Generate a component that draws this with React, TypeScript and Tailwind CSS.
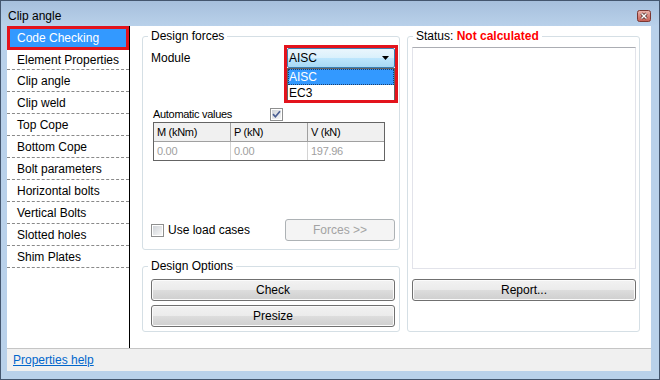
import React from "react";

function CheckBox({ checked }: { checked?: boolean }) {
  return (
    <div className="w-[13px] h-[13px] flex-none border border-[#8e8f8f] bg-white p-[1px]">
      <div className="w-full h-full bg-[linear-gradient(135deg,#cfd3d8,#f7f7f7)] flex items-center justify-center">
        {checked && (
          <svg width="9" height="9" viewBox="0 0 9 9">
            <path d="M1 4.2 L3.4 6.8 L8 1.2" stroke="#4b5f93" strokeWidth="1.7" fill="none" />
          </svg>
        )}
      </div>
    </div>
  );
}

function Btn({ children, className = "" }: { children: React.ReactNode; className?: string }) {
  return (
    <div
      className={
        "h-[22px] w-full flex-none rounded-[3px] border border-[#707070] bg-[linear-gradient(#f2f2f2_0%,#ebebeb_50%,#dddddd_50%,#cfcfcf_100%)] shadow-[inset_0_0_0_1px_#fbfbfb] flex items-center justify-center text-[12px] text-black " +
        className
      }
    >
      {children}
    </div>
  );
}

const navItems = [
  "Clip angle",
  "Clip weld",
  "Top Cope",
  "Bottom Cope",
  "Bolt parameters",
  "Horizontal bolts",
  "Vertical Bolts",
  "Slotted holes",
  "Shim Plates",
];

export default function App() {
  return (
    <div className="w-[660px] h-[380px] border border-[#44566e] bg-[#b9d1ea] flex flex-col [font-family:'Liberation_Sans',Arial,sans-serif] text-black overflow-hidden">
      {/* Title bar */}
      <div className="h-[25px] flex-none flex items-center justify-between pl-[7px] pr-[8px] pt-[5px] bg-[linear-gradient(#a6bfdc,#b9d1ea)]">
        <span className="text-[12px] leading-[16px]">Clip angle</span>
        <svg width="14" height="12" viewBox="0 0 14 12">
          <defs>
            <linearGradient id="cb" x1="0" y1="0" x2="0" y2="1">
              <stop offset="0" stopColor="#ebb6ae" />
              <stop offset="0.5" stopColor="#d8867d" />
              <stop offset="1" stopColor="#c45d53" />
            </linearGradient>
          </defs>
          <rect x="0.5" y="0.5" width="13" height="11" rx="2" fill="url(#cb)" stroke="#7b3631" />
          <path d="M4.5 3.5 L9.5 8.5 M9.5 3.5 L4.5 8.5" stroke="#4a2320" strokeWidth="3" />
          <path d="M4.5 3.5 L9.5 8.5 M9.5 3.5 L4.5 8.5" stroke="#ffffff" strokeWidth="1.5" />
        </svg>
      </div>

      {/* Body */}
      <div className="flex-1 flex flex-col ml-[6px] mr-[8px] mb-[8px] bg-white min-h-0">
        <div className="flex-1 flex min-h-0">
          {/* Left nav */}
          <div className="w-[123px] flex-none border-r border-black bg-white flex flex-col text-[12px]">
            <div className="h-[24px] border-[3px] border-[#e3131c] bg-[#3399ff] text-white pl-[7px] flex items-center">
              Code Checking
            </div>
            <div className="h-[20px] border-b border-dashed border-[#8a8a8a] pl-[10px] flex items-center">
              Element Properties
            </div>
            {navItems.map((t) => (
              <div key={t} className="h-[22px] border-b border-dashed border-[#8a8a8a] pl-[10px] flex items-center">
                {t}
              </div>
            ))}
          </div>

          {/* Main */}
          <div className="flex-1 flex pl-[12px] pr-[11px] pt-[2px] pb-[16px] gap-[7px] text-[12px]">
            <div className="w-[258px] flex-none flex flex-col gap-[8px]">
              <fieldset className="flex-1 min-w-0 flex flex-col rounded-[3px] border border-[#d5dfe5] pl-[8px] pr-[4px] pb-[8px]">
                <legend className="-ml-[3px] px-[3px] text-[12px] leading-[16px]">Design forces</legend>
                <div className="mt-[4px] h-[20px] flex items-center justify-between">
                  <span>Module</span>
                  <div className="relative w-[108px] h-[20px]">
                    <div className="h-full border border-[#3c7fb1] rounded-[2px] bg-[linear-gradient(#eaf6fd_0%,#d9f0fc_50%,#bee6fd_50%,#a7d9f5_100%)] flex items-center justify-between pl-[1px] pr-[5px]">
                      <span>AISC</span>
                      <svg width="7" height="4" viewBox="0 0 7 4">
                        <path d="M0 0 H7 L3.5 4 Z" fill="#000" />
                      </svg>
                    </div>
                    <div className="absolute left-0 top-[20px] w-[108px] border border-[#646464] bg-white">
                      <div className="h-[16px] bg-[#3399ff] text-white pl-[1px] flex items-center outline-1 outline-dotted outline-[#1b3f6e] -outline-offset-1">
                        AISC
                      </div>
                      <div className="h-[16px] pl-[1px] flex items-center">EC3</div>
                    </div>
                    <div className="pointer-events-none absolute -left-[3px] -top-[3px] w-[114px] h-[58px] border-[3px] border-[#e3131c]" />
                  </div>
                </div>

                <div className="mt-[39px] h-[14px] flex items-center pl-[2px] text-[11px] tracking-[-0.3px]">
                  <span className="w-[117px]">Automatic values</span>
                  <CheckBox checked />
                </div>

                <div className="ml-[2px] mt-[1px] w-[232px] border border-[#646464] text-[11px] tracking-[-0.3px]">
                  <div className="grid grid-cols-[77px_77px_1fr] h-[19px] bg-[#f0f0f0] border-b border-[#a0a0a0]">
                    <div className="border-r border-[#a0a0a0] pl-[3px] flex items-center">M (kNm)</div>
                    <div className="border-r border-[#a0a0a0] pl-[3px] flex items-center">P (kN)</div>
                    <div className="pl-[3px] flex items-center">V (kN)</div>
                  </div>
                  <div className="grid grid-cols-[77px_77px_1fr] h-[18px] text-[#a0a0a0]">
                    <div className="border-r border-[#d4d4d4] pl-[3px] flex items-center">0.00</div>
                    <div className="border-r border-[#d4d4d4] pl-[3px] flex items-center">0.00</div>
                    <div className="pl-[3px] flex items-center">197.96</div>
                  </div>
                </div>

                <div className="flex-1" />

                <div className="h-[22px] flex items-center justify-between">
                  <div className="flex items-center gap-[4px]">
                    <CheckBox />
                    <span>Use load cases</span>
                  </div>
                  <div className="w-[110px] h-[22px] rounded-[3px] border border-[#adb2b5] bg-[#f4f4f4] text-[#a3a3a3] flex items-center justify-center">
                    Forces &gt;&gt;
                  </div>
                </div>
              </fieldset>

              <fieldset className="flex-none min-w-0 flex flex-col rounded-[3px] border border-[#d5dfe5] pl-[8px] pr-[4px] pb-[4px]">
                <legend className="-ml-[3px] px-[3px] text-[12px] leading-[16px]">Design Options</legend>
                <Btn className="mt-[5px]">Check</Btn>
                <Btn className="mt-[4px]">Presize</Btn>
              </fieldset>
            </div>

            <fieldset className="flex-1 min-w-0 flex flex-col rounded-[3px] border border-[#d5dfe5] pl-[4px] pr-[3px]">
              <legend className="ml-[1px] px-[3px] text-[12px] leading-[16px]">
                Status: <span className="font-bold text-[#ff0000]">Not calculated</span>
              </legend>
              <div className="mt-[3px] h-[222px] flex-none border border-[#e2e3ea] border-t-[#abadb3]" />
              <Btn className="mt-[10px]">Report...</Btn>
            </fieldset>
          </div>
        </div>

        {/* Status bar */}
        <div className="h-[23px] flex-none border-t border-[#c5c5c5] bg-[#f0f0f0] flex items-center pl-[6px] text-[12px]">
          <span className="text-[#0066cc] underline">Properties help</span>
        </div>
      </div>
    </div>
  );
}
